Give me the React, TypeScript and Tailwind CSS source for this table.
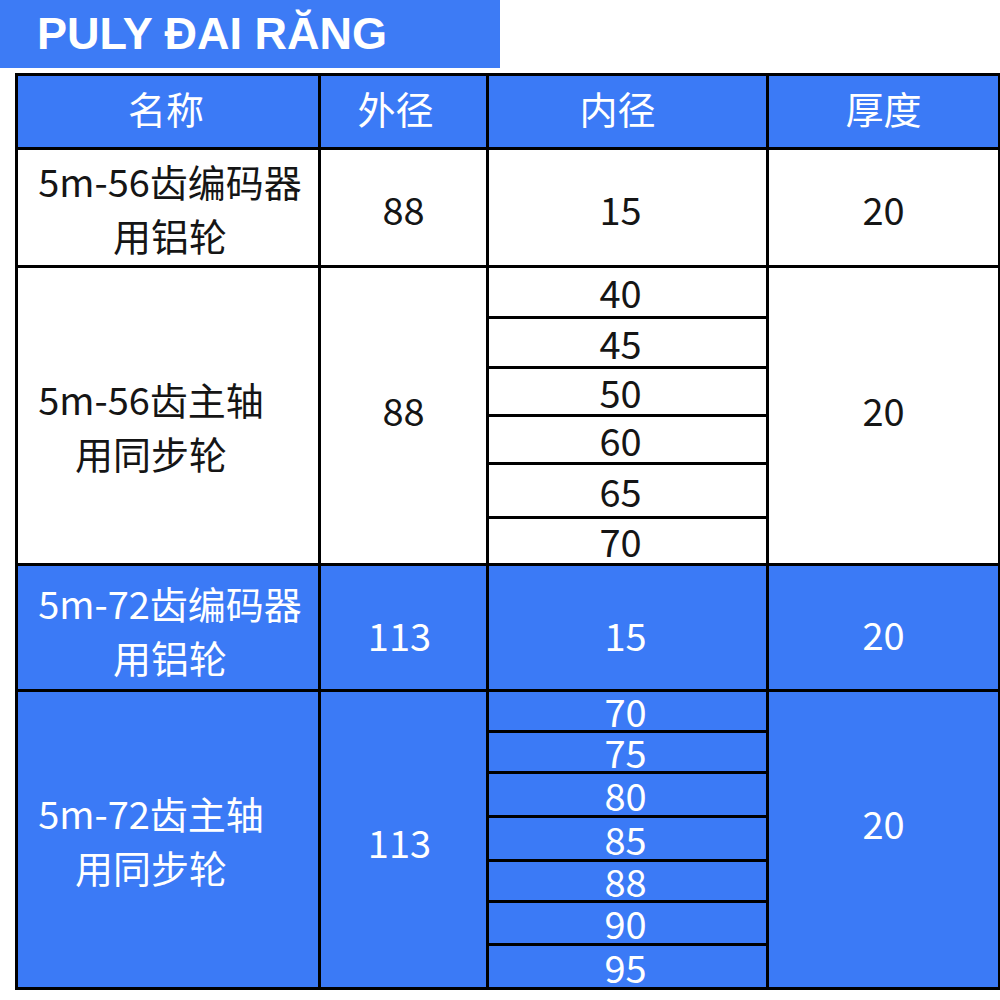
const cjk = "font-['Noto_Sans_CJK_SC','Noto_Sans',sans-serif]";

type Row = {
  name: string[];
  nameCls: string;
  outer: string;
  outerCls: string;
  inner: { value: string; h: string }[];
  innerCls: string;
  thick: string;
  thickCls: string;
  blue: boolean;
};

const rows: Row[] = [
  {
    name: ["5m-56齿编码器", "用铝轮"],
    nameCls: "pl-[4px]",
    outer: "88",
    outerCls: "pt-[2px]",
    inner: [{ value: "15", h: "h-full" }],
    innerCls: "pr-[14px] pt-[2px]",
    thick: "20",
    thickCls: "pt-[2px]",
    blue: false,
  },
  {
    name: ["5m-56齿主轴", "用同步轮"],
    nameCls: "pr-[34px] pt-[20px]",
    outer: "88",
    outerCls: "pb-[12px]",
    inner: [
      { value: "40", h: "h-[51px]" },
      { value: "45", h: "h-[50px]" },
      { value: "50", h: "h-[48px]" },
      { value: "60", h: "h-[48px]" },
      { value: "65", h: "h-[54px]" },
      { value: "70", h: "h-[44px]" },
    ],
    innerCls: "pr-[14px]",
    thick: "20",
    thickCls: "pb-[12px]",
    blue: false,
  },
  {
    name: ["5m-72齿编码器", "用铝轮"],
    nameCls: "pl-[4px] pt-[4px]",
    outer: "113",
    outerCls: "pt-[14px] pr-[8px]",
    inner: [{ value: "15", h: "h-full" }],
    innerCls: "pr-[4px] pt-[14px]",
    thick: "20",
    thickCls: "pt-[12px]",
    blue: true,
  },
  {
    name: ["5m-72齿主轴", "用同步轮"],
    nameCls: "pr-[34px]",
    outer: "113",
    outerCls: "pt-[4px] pr-[8px]",
    inner: [
      { value: "70", h: "h-[41px]" },
      { value: "75", h: "h-[41px]" },
      { value: "80", h: "h-[44px]" },
      { value: "85", h: "h-[44px]" },
      { value: "88", h: "h-[41px]" },
      { value: "90", h: "h-[43px]" },
      { value: "95", h: "h-[41px]" },
    ],
    innerCls: "pr-[4px]",
    thick: "20",
    thickCls: "pb-[34px]",
    blue: true,
  },
];

const headers = [
  { label: "名称", cls: "pr-[4px]" },
  { label: "外径", cls: "pr-[16px]" },
  { label: "内径", cls: "pr-[20px]" },
  { label: "厚度", cls: "" },
];

export default function App() {
  return (
    <div className="h-[1000px] w-[1000px] overflow-hidden bg-white">
      {/* Title */}
      <div className="flex h-[68px] w-[500px] items-center bg-[#3d7bf5] pb-[2px] pl-[37px]">
        <span className="font-['Liberation_Sans',Arial,sans-serif] text-[45px] font-bold leading-none text-white">
          PULY ĐAI RĂNG
        </span>
      </div>

      {/* Table */}
      <div
        className={`ml-[15px] mt-[5px] grid w-[986px] grid-cols-[303px_168px_280px_232px] grid-rows-[74px_118px_298px_126px_298px] border-l-[3px] border-t-[3px] border-black ${cjk} text-[38px]`}
      >
        {headers.map((h) => (
          <div
            key={h.label}
            className={`flex items-center justify-center border-b-[3px] border-r-[3px] border-black bg-[#3b7af6] pb-[8px] leading-none text-white ${h.cls}`}
          >
            {h.label}
          </div>
        ))}

        {rows.map((row, i) => {
          const tone = row.blue ? "bg-[#3b7af6] text-white" : "bg-white text-[#151515]";
          const cell = `flex items-center justify-center border-b-[3px] border-r-[3px] border-black ${tone}`;
          return [
            <div key={`n${i}`} className={`${cell} ${row.nameCls}`}>
              <div className="text-center leading-[54px]">
                {row.name[0]}
                <br />
                {row.name[1]}
              </div>
            </div>,
            <div key={`o${i}`} className={`${cell} ${row.outerCls}`}>
              <span className="leading-none">{row.outer}</span>
            </div>,
            <div key={`i${i}`} className={`flex flex-col border-b-[3px] border-r-[3px] border-black ${tone}`}>
              {row.inner.map((v, j) => (
                <div
                  key={v.value + j}
                  className={`flex shrink-0 items-center justify-center leading-none ${v.h} ${row.innerCls} ${
                    j < row.inner.length - 1 ? "border-b-[3px] border-black" : ""
                  }`}
                >
                  {v.value}
                </div>
              ))}
            </div>,
            <div key={`t${i}`} className={`${cell} ${row.thickCls}`}>
              <span className="leading-none">{row.thick}</span>
            </div>,
          ];
        })}
      </div>
    </div>
  );
}
